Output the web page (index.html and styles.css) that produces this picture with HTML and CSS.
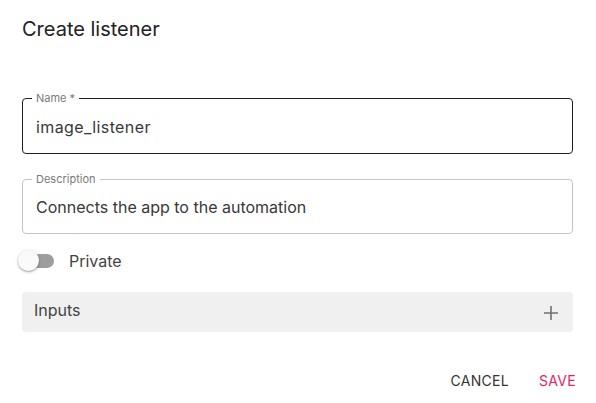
FILE: index.html
```html
<!DOCTYPE html>
<html>
<head>
<meta charset="utf-8">
<link rel="stylesheet" href="styles.css">
</head>
<body>
<div class="dialog">
  <h2 class="title">Create listener</h2>
  <div class="content">
    <div class="field focused">
      <span class="label">Name *</span>
      <span class="value">image_listener</span>
    </div>
    <div class="field">
      <span class="label">Description</span>
      <span class="value">Connects the app to the automation</span>
    </div>
    <div class="toggle-row">
      <span class="switch"><span class="track"></span><span class="thumb"></span></span>
      <span class="toggle-label">Private</span>
    </div>
    <div class="inputs">
      <span class="inputs-label">Inputs</span>
      <svg class="plus" width="14" height="14" viewBox="0 0 14 14"><path d="M7 0v14M0 7h14" stroke="#707070" stroke-width="1.6"/></svg>
    </div>
  </div>
  <div class="actions">
    <span class="btn cancel">CANCEL</span>
    <span class="btn save">SAVE</span>
  </div>
</div>
</body>
</html>
```
FILE: styles.css
```css
html, body {
  margin: 0;
  padding: 0;
  background: #fff;
  font-family: Inter, "Noto Sans", sans-serif;
  color: #333;
}
.dialog {
  width: 596px;
  height: 403px;
  box-sizing: border-box;
  display: flex;
  flex-direction: column;
}
.title {
  margin: 0;
  padding: 17px 22px 0;
  font-size: 20px;
  font-weight: 400;
  line-height: 24px;
  color: #222;
}
.content {
  padding: 0 23px 0 22px;
  display: flex;
  flex-direction: column;
}
.field {
  position: relative;
  height: 55px;
  box-sizing: border-box;
  border: 1px solid #c4c4c4;
  border-radius: 4px;
  display: flex;
  align-items: center;
  padding: 0 13px;
  margin-top: 25px;
}
.field.focused {
  height: 56px;
  border-color: #1f1f1f;
  margin-top: 57px;
}
.label {
  position: absolute;
  left: 9px;
  top: -8px;
  padding: 0 4px;
  background: #fff;
  font-size: 11px;
  line-height: 14px;
  color: #7a7a7a;
}
.value {
  font-size: 16px;
  color: #383838;
  padding-top: 1px;
}
.focused .value {
  letter-spacing: 0.4px;
}
.toggle-row {
  display: flex;
  align-items: center;
  height: 22px;
  margin-top: 16px;
}
.switch {
  position: relative;
  width: 36px;
  height: 22px;
  margin-left: -4px;
  display: flex;
  align-items: center;
}
.track {
  margin-left: 4px;
  width: 34px;
  height: 14px;
  border-radius: 7px;
  background: #9e9e9e;
}
.thumb {
  position: absolute;
  left: 0;
  top: 0;
  width: 21px;
  height: 21px;
  border-radius: 50%;
  background: #fafafa;
  box-shadow: 0 1px 3px rgba(0,0,0,0.3), 0 1px 1px rgba(0,0,0,0.14);
}
.toggle-label {
  margin-left: 15px;
  font-size: 16px;
  color: #444;
}
.inputs {
  margin-top: 20px;
  height: 40px;
  background: #f0f0f0;
  border-radius: 4px;
  display: flex;
  align-items: center;
  justify-content: space-between;
  padding: 0 15px 0 12px;
  box-sizing: border-box;
}
.inputs-label {
  font-size: 16px;
  color: #444;
  margin-top: -4px;
}
.plus {
  margin-top: 1px;
}
.actions {
  display: flex;
  justify-content: flex-end;
  gap: 30px;
  padding: 41px 20px 0;
}
.btn {
  font-size: 14px;
  letter-spacing: 0.3px;
  line-height: 16px;
}
.cancel { color: #333; }
.save { color: #e91e63; }
```
